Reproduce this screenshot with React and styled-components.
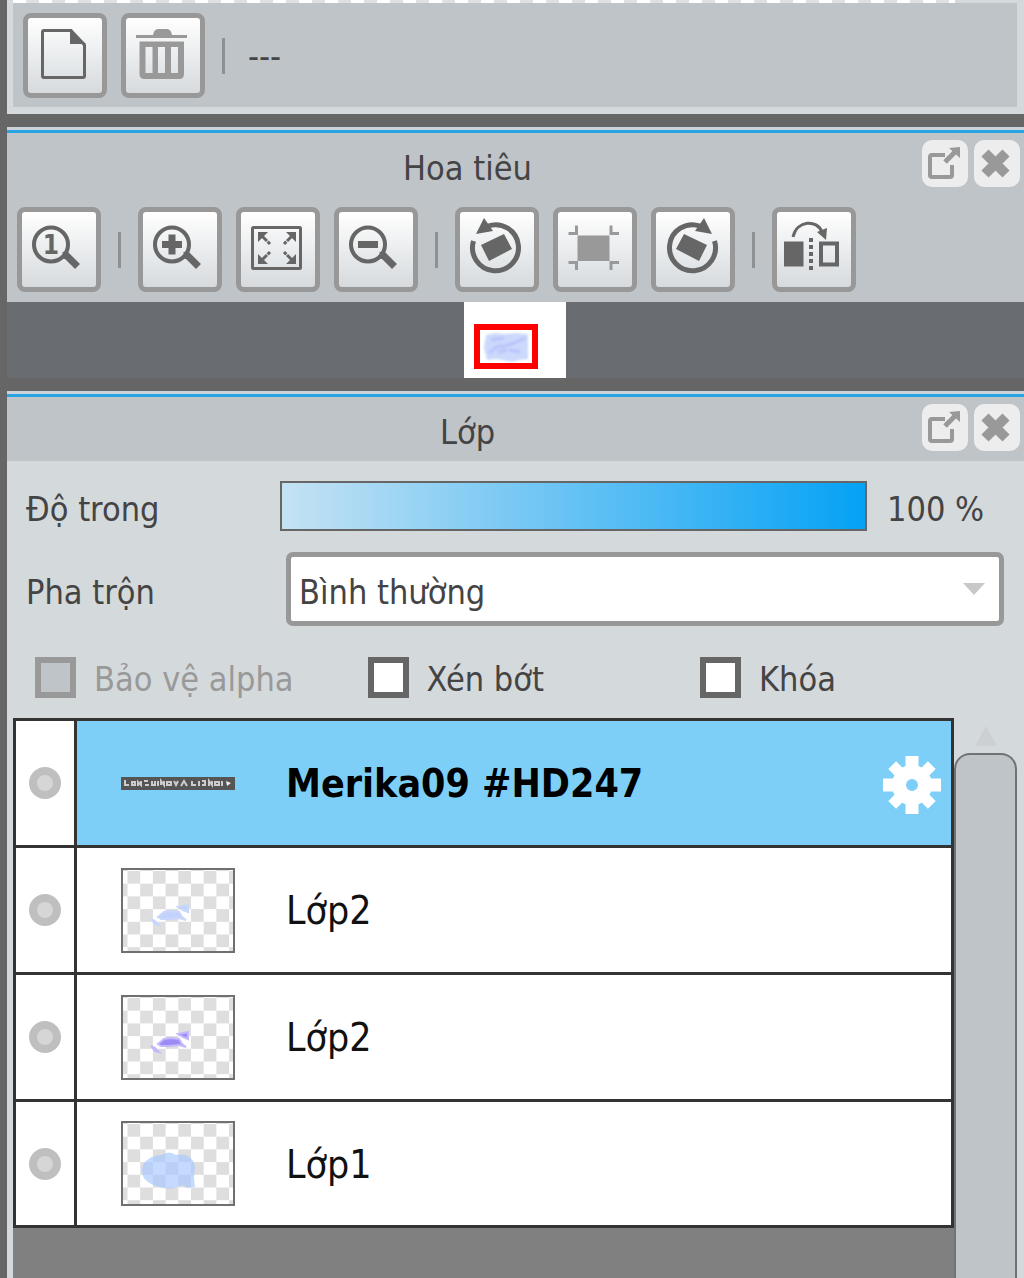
import React, { useState } from 'react'
import styled, { createGlobalStyle } from 'styled-components'

const GlobalStyle = createGlobalStyle`
    * { box-sizing: border-box; }
    body {
        margin: 0;
        background: #666;
        font-family: "DejaVu Sans Condensed", "DejaVu Sans", sans-serif;
        font-size: 34px;
        line-height: 40px;
        color: #444;
    }
    button, select, input { font: inherit; color: inherit; margin: 0; }
`

const Page = styled.main`
    min-height: 100vh;
    padding-left: 7px;
    display: flex;
    flex-direction: column;
    overflow: hidden;
`

const TopPanel = styled.section`
    background: #d4d9dc;
    padding: 0 7px 7px 6px;
    margin-bottom: 13px;
`

const CanvasEdge = styled.div`
    height: 3px;
    margin-right: 62px;
    background: repeating-linear-gradient(90deg, #fff 0 13px, #e0e0e0 13px 26px);
`

const Toolbar = styled.div`
    display: flex;
    align-items: center;
    gap: 14px;
    background: #bfc4c8;
    padding: ${p => p.$inset ? '10px 10px 9px' : '10px 10px'};
`

const ToolButton = styled.button`
    width: 84px;
    height: 85px;
    flex: none;
    padding: 0;
    border: 5px solid #989898;
    border-radius: 8px;
    background: linear-gradient(#fff, #d6dadd);
    color: ${p => p.disabled ? '#999' : '#666'};
    svg { display: block; }
`

const Separator = styled.span`
    width: 3px;
    height: 36px;
    margin: 0 3px;
    background: #8e9194;
`

const Status = styled.span`
    margin-left: 6px;
`

const Panel = styled.section`
    display: flex;
    flex-direction: column;
    border-top: 3px solid #c9d3d9;
    background: #d4d9dc;
    flex: ${p => p.$grow ? 1 : 'none'};
`

const Header = styled.header`
    display: flex;
    align-items: flex-start;
    gap: 6px;
    height: 67px;
    border-top: 3px solid #29a5e3;
    background: #bfc4c8;
    padding: 7px 4px 0 12px;
`

const Title = styled.h2`
    flex: 1;
    margin: 8px 0 0;
    font-size: 34px;
    font-weight: normal;
    text-align: center;
`

const HeaderButton = styled.button`
    width: 46px;
    height: 47px;
    padding: 0;
    border: 0;
    border-radius: 10px;
    background: #ededed;
    color: #999;
    svg { display: block; }
`

const Navigator = styled.div`
    display: flex;
    justify-content: center;
    height: 76px;
    padding-right: 2px;
    background: #696c70;
`

const Gap = styled.div`
    height: 13px;
`

const Controls = styled.div`
    padding: 20px 0 0 19px;
`

const Field = styled.div`
    display: grid;
    grid-template-columns: 254px 1fr ${p => p.$wide ? '20px' : '157px'};
    align-items: center;
    margin-bottom: 21px;
    label { padding-top: 6px; }
`

const Slider = styled.input`
    appearance: none;
    width: 100%;
    height: 50px;
    border: 2px solid #666;
    background: linear-gradient(90deg, #c5e2f3, #05a2f5);
    &::-webkit-slider-thumb {
        appearance: none;
        width: 2px;
        height: 46px;
        background: transparent;
    }
`

const Value = styled.output`
    padding: 6px 0 0 20px;
    white-space: nowrap;
`

const SelectBox = styled.div`
    position: relative;
    margin-left: 6px;
    svg {
        position: absolute;
        right: 19px;
        top: 31px;
        pointer-events: none;
    }
`

const Select = styled.select`
    appearance: none;
    display: block;
    width: 100%;
    height: 74px;
    padding: 6px 50px 0 8px;
    border: 5px solid #989898;
    border-radius: 7px;
    background: #fff;
`

const Checks = styled.div`
    display: grid;
    grid-template-columns: 1fr 1fr 324px;
    padding: 10px 0 21px 9px;
`

const Check = styled.label`
    display: flex;
    align-items: center;
    gap: 18px;
    height: 40px;
    color: ${p => p.$off ? '#999' : 'inherit'};
    span { padding-top: 4px; }
`

const CheckInput = styled.input`
    appearance: none;
    width: 41px;
    height: 41px;
    flex: none;
    border: 6px solid #666;
    background: #fff;
    &:checked { background: #29a5e3; }
    &:disabled { border-color: #999; background: #bfc4c8; }
`

const ListArea = styled.div`
    flex: 1;
    display: grid;
    grid-template-columns: 1fr 63px;
    padding: 0 7px 0 6px;
`

const ListColumn = styled.div`
    background: #808080;
`

const Layers = styled.ul`
    list-style: none;
    margin: 0;
    padding: 0;
    border: 3px solid #333;
    border-bottom: 0;
    color: #111;
    font-size: 39px;
`

const Layer = styled.li`
    display: flex;
    height: 127px;
    border-bottom: 3px solid #333;
    background: ${p => p.$active ? '#7ecff8' : '#fff'};
    font-weight: ${p => p.$active ? 'bold' : 'normal'};
    color: ${p => p.$active ? '#000' : 'inherit'};
    &:last-child { height: 126px; }
`

const Eye = styled.button`
    width: 61px;
    padding: 0;
    border: 0;
    border-right: 3px solid #333;
    background: #fff;
    display: flex;
    align-items: center;
    justify-content: center;
`

const Dot = styled.span`
    width: 32px;
    height: 32px;
    border: 8px solid #bfbfbf;
    border-radius: 50%;
    background: #d6d6d6;
`

const LayerBody = styled.div`
    flex: 1;
    display: flex;
    align-items: center;
    padding: 0 10px 0 44px;
`

const LayerName = styled.span`
    flex: 1;
    padding: 2px 0 0 51px;
`

const GearButton = styled.button`
    padding: 4px 0 0;
    border: 0;
    background: none;
    color: #fff;
    svg { display: block; }
`

const Scrollbar = styled.div`
    display: flex;
    flex-direction: column;
    align-items: center;
    padding-top: 8px;
`

const ScrollThumb = styled.div`
    flex: 1;
    width: 100%;
    margin-top: 7px;
    border: 2px solid #707376;
    border-bottom: 0;
    border-radius: 16px 16px 0 0;
    background: #bfc4c8;
`

const Icon = ({ children, size = 75 }) => (
    <svg width={size} height={size} viewBox={`0 0 ${size} ${size}`} fill="none" stroke="currentColor" aria-hidden="true">
        {children}
    </svg>
)

const NewIcon = () => (
    <Icon>
        <path d="M16 12.5H43L56.5 27V58Q56.5 59.5 55 59.5H16Q14.5 59.5 14.5 58V14Q14.5 12.5 16 12.5Z" strokeWidth="3" />
        <path d="M42 11L58 26H42Z" fill="currentColor" stroke="none" />
    </Icon>
)

const TrashIcon = () => (
    <Icon>
        <path
            d="M10 17H27Q28 11 32 11H41Q45 11 46 17H61V20H10ZM13.5 23.5H58V56Q58 61 53 61H18.5Q13.5 61 13.5 56ZM19.5 29V55H26.5V29ZM32 29V55H39V29ZM45 29V55H52V29Z"
            fill="currentColor" fillRule="evenodd" stroke="none"
        />
    </Icon>
)

const Lens = ({ children }) => (
    <Icon>
        <circle cx="29" cy="32.5" r="17" strokeWidth="4" />
        <path d="M41 43.5L44 43L55.5 54.5" strokeWidth="7" />
        {children}
    </Icon>
)

const FitIcon = () => (
    <Icon>
        <rect x="11.5" y="15.5" width="48" height="41" rx="1" strokeWidth="3" />
        <path d="M21 24L29 32M51 24L43 32M21 48L29 40M51 48L43 40" strokeWidth="3" strokeDasharray="7 1 4" />
        <path d="M17 20H27L17 30ZM55 20H45L55 30ZM17 52H27L17 42ZM55 52H45L55 42Z" fill="currentColor" stroke="none" />
    </Icon>
)

const RotateIcon = ({ flip }) => (
    <Icon>
        <g transform={flip ? 'matrix(-1 0 0 1 72 0)' : undefined}>
            <path d="M13.5 29A23 23 0 1 0 28 14" strokeWidth="5" />
            <path d="M24 6L33 19L16 22Z" fill="currentColor" stroke="none" />
            <path d="M21 33L44 22L52 37L29 49Z" fill="currentColor" stroke="none" />
        </g>
    </Icon>
)

const ResetIcon = () => (
    <Icon>
        <rect x="19.5" y="23.5" width="32" height="25.5" fill="currentColor" stroke="none" />
        <path d="M10.5 21.5H18.5V13.5M61 21.5H53V13.5M10.5 50.5H18.5V58M61 50.5H53V58" strokeWidth="3" />
    </Icon>
)

const FlipIcon = () => (
    <Icon>
        <rect x="7" y="29.5" width="19.5" height="25" fill="currentColor" stroke="none" />
        <rect x="44" y="31.5" width="16" height="21" strokeWidth="4" />
        <path d="M34 26V58" strokeWidth="4" strokeDasharray="4 3" />
        <path d="M16 25C20 8 40 7 45 20" strokeWidth="3" />
        <path d="M40 20L50 16L49 28Z" fill="currentColor" stroke="none" />
    </Icon>
)

const PopOutIcon = () => (
    <Icon size={46}>
        <path d="M23 14H10Q8 14 8 16V34Q8 36 10 36H28Q30 36 30 34V24" strokeWidth="4" />
        <path d="M23 21L33 11" strokeWidth="5" />
        <path d="M27 7L38 6V17Z" fill="currentColor" stroke="none" />
    </Icon>
)

const CloseIcon = () => (
    <Icon size={46}>
        <path d="M11 12L32 33M32 12L11 33" strokeWidth="10" />
    </Icon>
)

const GearIcon = () => (
    <Icon size={58}>
        <circle cx="29" cy="29" r="13" strokeWidth="14" />
        {[0, 45, 90, 135, 180, 225, 270, 315].map(a => (
            <path
                key={a}
                d={a % 90 ? 'M29 14V1' : 'M29 14V0'}
                strokeWidth={a % 90 ? 11 : 13}
                transform={`rotate(${a} 29 29)`}
            />
        ))}
    </Icon>
)

const strokes = 'M30 51L34 53L38 57L34 56ZM37 49L43 44L50 43L58 44L61 49L65 52L58 50L48 51L40 51ZM57 39L62 38L67 37L67 44L62 42Z'

const Thumb = ({ kind }) => {
    if (kind === 'text') {
        return (
            <svg width="114" height="13" viewBox="0 0 114 13" aria-hidden="true">
                <rect width="114" height="13" fill="#555" />
                <path d="M4 3V8H8M11 5H14V8H11ZM17 9V5L20 8V4M23 4H27M24 8H28M31 4V8H34V4M37 4V9M40 8V4L43 8V4M46 5H50V8H46ZM53 4L55 8L57 4M60 9L63 4L66 9M71 4V8H75M78 4V9M81 4H84V8H81M88 9V4L91 8V4M94 5H98V8H94ZM101 4V9" fill="none" stroke="#ccc" strokeWidth="2" />
                <path d="M105 4L110 6L106 9Z" fill="#eee" />
            </svg>
        )
    }
    return (
        <svg width="114" height="85" viewBox="0 0 114 85" aria-hidden="true">
            <defs>
                <pattern id={`grid-${kind}`} x="6.5" y="3" width="25.4" height="25.4" patternUnits="userSpaceOnUse">
                    <rect width="25.4" height="25.4" fill="#fff" />
                    <path d="M0 0H12.7V12.7H25.4V25.4H12.7V12.7H0Z" fill="#dedede" />
                </pattern>
            </defs>
            <rect x="1" y="1" width="112" height="83" fill={`url(#grid-${kind})`} stroke="#707070" strokeWidth="2" />
            {kind === 'light' && <path d={strokes} fill="#c3d2fb" stroke="#c9d7fb" strokeWidth="2" />}
            {kind === 'violet' && <path d={strokes} fill="#9c8cf6" stroke="#c3b9fb" strokeWidth="2" />}
            {kind === 'fill' && (
                <path d="M21 49C21 40 31 34 41 34Q48 29 55 34C66 32 73 37 74 46L73 57L74 66L66 67L61 64C50 71 38 66 32 64C24 60 21 56 21 49Z" fill="#a9c8ff" opacity="0.68" />
            )}
        </svg>
    )
}

const Preview = () => (
    <svg width="102" height="76" viewBox="0 0 102 76" role="img" aria-label="Hoa tiêu">
        <defs>
            <filter id="soft"><feGaussianBlur stdDeviation="1" /></filter>
        </defs>
        <rect width="102" height="76" fill="#fff" />
        <g filter="url(#soft)">
            <path d="M22 33L31 31L42 32L51 31L64 32V57L55 58L48 60L33 57L23 58L20 45Z" fill="#cbd9fc" />
            <path d="M25 51L32 45L41 44L50 41L61 36M27 38L40 36M45 48L56 50M34 50L43 48" fill="none" stroke="#bcc2fa" strokeWidth="3" />
        </g>
        <rect x="13" y="25" width="58" height="39" fill="none" stroke="#fe0000" strokeWidth="6" />
    </svg>
)

const PanelHeader = ({ title }) => (
    <Header>
        <Title>{title}</Title>
        <HeaderButton aria-label="Tách"><PopOutIcon /></HeaderButton>
        <HeaderButton aria-label="Đóng"><CloseIcon /></HeaderButton>
    </Header>
)

const layers = [
    { id: 1, name: 'Merika09 #HD247', kind: 'text' },
    { id: 2, name: 'Lớp2', kind: 'light' },
    { id: 3, name: 'Lớp2', kind: 'violet' },
    { id: 4, name: 'Lớp1', kind: 'fill' },
]

const App = () => {
    const [opacity, setOpacity] = useState(100)

    return (
        <Page>
            <GlobalStyle />
            <TopPanel>
                <CanvasEdge />
                <Toolbar $inset>
                    <ToolButton aria-label="Mới"><NewIcon /></ToolButton>
                    <ToolButton aria-label="Xóa" disabled><TrashIcon /></ToolButton>
                    <Separator />
                    <Status>---</Status>
                </Toolbar>
            </TopPanel>

            <Panel>
                <PanelHeader title="Hoa tiêu" />
                <Toolbar>
                    <ToolButton aria-label="100%">
                        <Lens>
                            <text x="29" y="42" textAnchor="middle" fontSize="26" fontWeight="bold" fill="currentColor" stroke="none">1</text>
                        </Lens>
                    </ToolButton>
                    <Separator />
                    <ToolButton aria-label="Phóng to">
                        <Lens><path d="M19 32.5H39M29 22.5V42.5" strokeWidth="7" /></Lens>
                    </ToolButton>
                    <ToolButton aria-label="Vừa khung"><FitIcon /></ToolButton>
                    <ToolButton aria-label="Thu nhỏ">
                        <Lens><path d="M19 32.5H39" strokeWidth="7" /></Lens>
                    </ToolButton>
                    <Separator />
                    <ToolButton aria-label="Xoay trái"><RotateIcon /></ToolButton>
                    <ToolButton aria-label="Đặt lại" disabled><ResetIcon /></ToolButton>
                    <ToolButton aria-label="Xoay phải"><RotateIcon flip /></ToolButton>
                    <Separator />
                    <ToolButton aria-label="Lật"><FlipIcon /></ToolButton>
                </Toolbar>
                <Navigator><Preview /></Navigator>
            </Panel>
            <Gap />

            <Panel $grow>
                <PanelHeader title="Lớp" />
                <Controls>
                    <Field>
                        <label htmlFor="opacity">Độ trong</label>
                        <Slider
                            id="opacity"
                            type="range"
                            value={opacity}
                            onChange={e => setOpacity(e.target.value)}
                        />
                        <Value htmlFor="opacity">{opacity} %</Value>
                    </Field>
                    <Field $wide>
                        <label htmlFor="blend">Pha trộn</label>
                        <SelectBox>
                            <Select id="blend">
                                <option>Bình thường</option>
                            </Select>
                            <svg width="22" height="12" viewBox="0 0 22 12" aria-hidden="true">
                                <path d="M0 0H22L11 12Z" fill="#c8c8c8" />
                            </svg>
                        </SelectBox>
                    </Field>
                    <Checks>
                        <Check $off><CheckInput type="checkbox" disabled /><span>Bảo vệ alpha</span></Check>
                        <Check><CheckInput type="checkbox" /><span>Xén bớt</span></Check>
                        <Check><CheckInput type="checkbox" /><span>Khóa</span></Check>
                    </Checks>
                </Controls>
                <ListArea>
                    <ListColumn>
                        <Layers>
                            {layers.map((layer, i) => (
                                <Layer key={layer.id} $active={i === 0}>
                                    <Eye aria-label="Hiện"><Dot /></Eye>
                                    <LayerBody>
                                        <Thumb kind={layer.kind} />
                                        <LayerName>{layer.name}</LayerName>
                                        {i === 0 && <GearButton aria-label="Cài đặt"><GearIcon /></GearButton>}
                                    </LayerBody>
                                </Layer>
                            ))}
                        </Layers>
                    </ListColumn>
                    <Scrollbar>
                        <svg width="22" height="20" viewBox="0 0 22 20" aria-hidden="true">
                            <path d="M11 0L22 20H0Z" fill="#ccd0d2" />
                        </svg>
                        <ScrollThumb />
                    </Scrollbar>
                </ListArea>
            </Panel>
        </Page>
    )
}

export default App
